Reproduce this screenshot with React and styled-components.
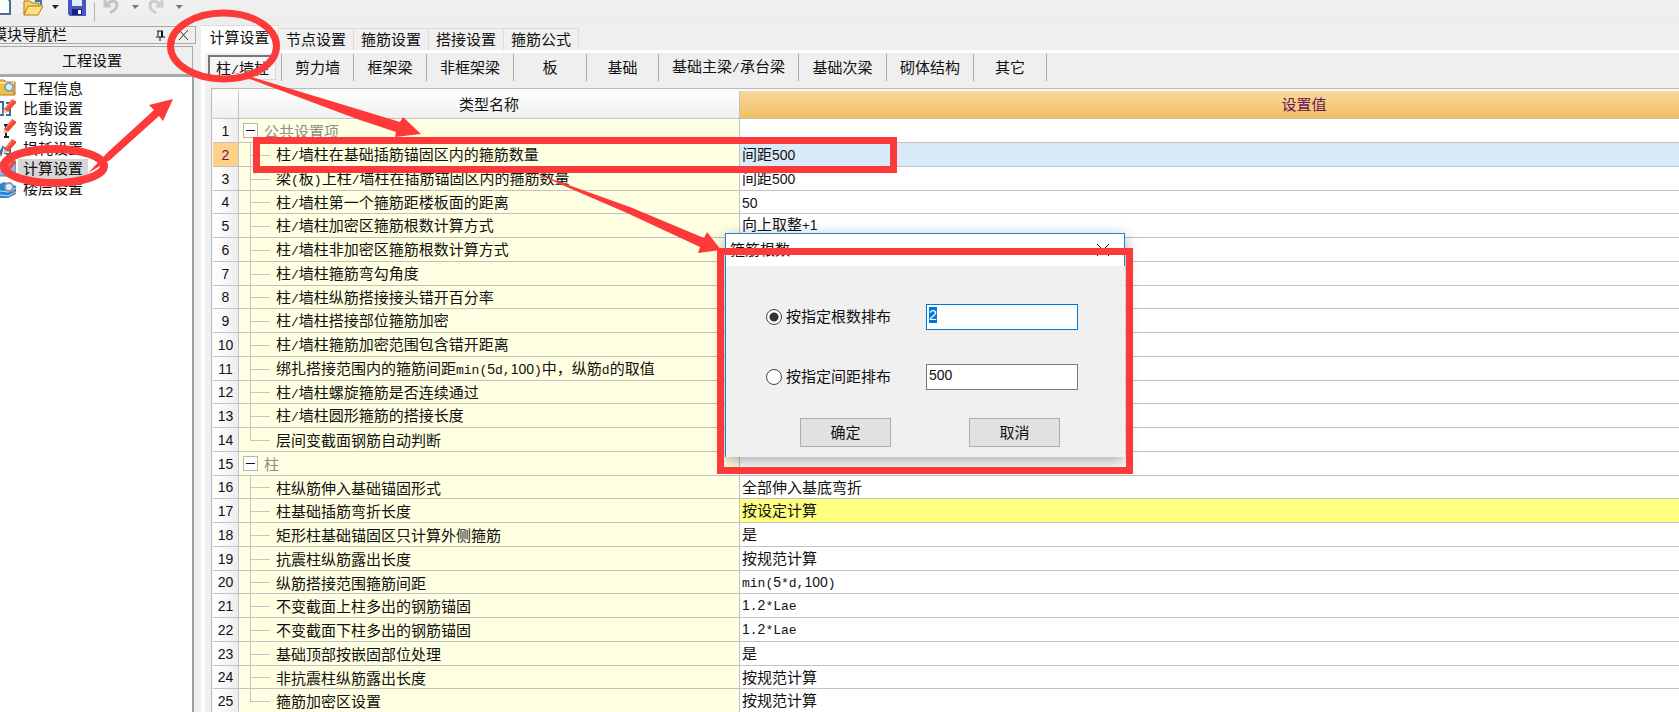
import React, { useState, useEffect, useRef } from 'react';
import styled, { createGlobalStyle } from 'styled-components';

const GlobalStyle = createGlobalStyle`
  * {
    box-sizing: border-box;
  }

  body {
    margin: 0;
    overflow: hidden;
    background: #efefef;
  }

  body, button, input {
    font-family: "Liberation Sans", "Noto Sans CJK SC", sans-serif;
    font-size: 15px;
    line-height: 20px;
    color: #111;
  }

  ::selection {
    background: #0078d7;
    color: #fff;
  }
`;

const Page = styled.div`
  position: relative;
  display: flex;
  flex-direction: column;
  height: 100vh;
  overflow: hidden;
`;

const Half = styled.span`
  font-family: "Liberation Mono", monospace;
  font-size: 13px;
`;

const Digits = styled.span`
  font-size: 14px;
`;

const Toolbar = styled.header`
  display: flex;
  align-items: center;
  flex: none;
  height: 24px;
  background: linear-gradient(#f1f1f1, #ededed);
`;

const ToolButton = styled.button`
  flex: none;
  width: ${props => props.$width}px;
  height: 24px;
  padding: 0;
  border: none;
  background: none;

  svg {
    display: block;
  }
`;

const ToolDivider = styled.div`
  width: 1px;
  height: 20px;
  margin: 0 8px;
  background: #b4b4b4;
`;

const Workspace = styled.div`
  display: flex;
  flex: 1;
  min-height: 0;
`;

const Sidebar = styled.aside`
  display: flex;
  flex-direction: column;
  flex: none;
  width: 204px;
  margin-left: -8px;
  padding-top: 2px;
`;

const PanelTitle = styled.div`
  display: flex;
  align-items: center;
  height: 18px;
  padding-right: 5px;
  border: 1px solid #a9a9a9;
  border-left: none;
  white-space: nowrap;

  span {
    flex: 1;
  }
`;

const PanelButton = styled.button`
  width: 12px;
  height: 14px;
  margin-left: 12px;
  padding: 0;
  border: none;
  background: none;

  svg {
    display: block;
  }
`;

const SectionButton = styled.button`
  width: 201px;
  height: 31px;
  margin-top: 2px;
  padding: 0;
  border: solid #a9a9a9;
  border-width: 1px 1px 3px 0;
  background: #efefef;
`;

const Tree = styled.nav`
  flex: 1;
  width: 202px;
  padding-top: 2px;
  border-right: 2px solid #9c9ea6;
  background: #fff;
`;

const TreeItem = styled.a`
  display: flex;
  align-items: center;
  height: 20px;
  color: #111;
  text-decoration: none;

  svg {
    flex: none;
    margin-right: 2px;
  }

  span {
    padding: 0 5px;
    background: ${props => props.$active ? '#d6d6d6' : 'transparent'};
  }
`;

const Main = styled.main`
  display: flex;
  flex-direction: column;
  flex: 1;
  min-width: 0;
  margin-left: 5px;
`;

const Tabs = styled.div`
  display: flex;
  align-items: flex-end;
  height: 26px;
`;

const Tab = styled.button`
  flex: none;
  width: ${props => props.$active ? 78 : 75}px;
  height: ${props => props.$active ? 25 : 22}px;
  padding: 0;
  border: solid #dcdcdc;
  border-width: 1px 1px 0 0;
  background: ${props => props.$active ? '#fff' : '#f0f0f0'};
`;

const TabPanel = styled.section`
  display: flex;
  flex-direction: column;
  flex: 1;
  min-height: 0;
  border: solid #fff;
  border-width: 3px 0 0 4px;
`;

const SubTabs = styled.div`
  display: flex;
  align-items: center;
  height: 35px;
  padding: 0 0 6px 3px;
`;

const SubTab = styled.button`
  flex: none;
  width: ${props => props.$width}px;
  height: 27px;
  padding: 0;
  border: none;
  border-right: 1px solid #a8a8a8;
  background: none;
`;

const PressedTab = styled.span`
  display: block;
  width: 68px;
  height: 25px;
  padding-top: 2px;
  border: 1px solid #d8d8d8;
  border-top: 2px solid #777;
  border-left: 2px solid #777;
  background: #f5f5f5;
`;

const GridFrame = styled.div`
  flex: 1;
  min-height: 0;
  margin-left: 6px;
  padding: 2px 0 0 1px;
  overflow: hidden;
  border: solid #b9b9be;
  border-width: 1px 0 0 1px;
  background: #f7f7f7;
`;

// the value column runs on past the right edge of the window
const Grid = styled.table`
  width: calc(100% + 190px);
  table-layout: fixed;
  border-collapse: separate;
  border-spacing: 0;
`;

const NumberCol = styled.col`
  width: 26px;
`;

const NameCol = styled.col`
  width: 501px;
`;

const HeadCell = styled.th`
  height: 28px;
  padding: 0;
  border: solid #c2c2c2;
  border-width: 0 1px 1px 0;
  background: ${props => props.$active ? 'linear-gradient(#f9d79d, #f0c162)' : 'linear-gradient(#fff, #efefef)'};
  color: ${props => props.$active ? '#6a1560' : '#111'};
  font-weight: normal;
`;

const Row = styled.tr`
  height: 24px;

  &:nth-child(4n) {
    height: 23px;
  }
`;

const Cell = styled.td`
  height: inherit;
  padding: 0;
  border: solid #c2c2c2;
  border-width: 0 1px 1px 0;
  line-height: 18px;
  white-space: nowrap;
`;

const NumberCell = styled(Cell)`
  background: ${props => props.$active ? '#fed088' : 'linear-gradient(90deg, #fff, #eee)'};
  color: ${props => props.$active ? '#6a1560' : '#111'};
  text-align: center;
`;

const NameCell = styled(Cell)`
  background: #ffffe1;
`;

const ValueCell = styled(Cell)`
  padding: 1px 0 0 2px;
  background: ${props => props.$fill || '#fff'};
`;

const NameInner = styled.div`
  display: flex;
  align-items: center;
  height: 22px;
  padding-left: ${props => props.$group ? 4 : 11}px;
  color: ${props => props.$group ? '#8c8c8c' : '#111'};
`;

const NameText = styled.span`
  padding-top: 3px;
`;

const Branch = styled.span`
  width: 26px;
  height: 24px;
  background-image: linear-gradient(#c6c6c6, #c6c6c6), linear-gradient(#c6c6c6, #c6c6c6);
  background-repeat: no-repeat;
  background-position: 0 0, 0 12px;
  background-size: 1px ${props => props.$last ? '50%' : '100%'}, 20px 1px;
`;

const Toggle = styled.button`
  display: flex;
  align-items: center;
  justify-content: center;
  width: 15px;
  height: 15px;
  margin-right: 6px;
  padding: 0;
  border: 1px solid #b5b5b5;
  background: #fff;

  &::before {
    content: "";
    width: 9px;
    height: 1px;
    background: #111;
  }
`;

const Dialog = styled.form`
  position: absolute;
  top: 233px;
  left: 725px;
  width: 400px;
  border-left: 1px solid #1883d7;
  background: #f0f0f0;
  box-shadow: 0 4px 14px rgba(0, 0, 0, 0.35);
`;

const DialogTitle = styled.div`
  display: flex;
  align-items: center;
  justify-content: space-between;
  height: 33px;
  padding: 0 15px 0 4px;
  border: solid #1883d7;
  border-width: 1px 1px 0 0;
  background: #fff;
`;

const DialogClose = styled.button`
  width: 12px;
  height: 12px;
  padding: 0;
  border: none;
  background: none;

  svg {
    display: block;
  }
`;

const Options = styled.div`
  display: grid;
  grid-template-columns: 160px 152px;
  row-gap: 34px;
  padding: 38px 0 0 40px;
`;

const OptionLabel = styled.label`
  display: flex;
  align-items: center;
  gap: 4px;
`;

const Radio = styled.input`
  width: 16px;
  height: 16px;
  margin: 0;
  appearance: none;
  border: 1px solid #444;
  border-radius: 50%;
  background: #fff;

  &:checked {
    background: radial-gradient(circle, #333 4px, #fff 5px);
  }
`;

const TextBox = styled.input`
  width: 100%;
  height: 26px;
  padding: 0 2px 4px;
  border: 1px solid #7a7a7a;
  outline: none;
  background: #fff;
  font-size: 14px;

  &:focus {
    border-color: #0078d7;
  }
`;

const DialogButtons = styled.div`
  display: flex;
  gap: 78px;
  padding: 28px 0 10px 74px;
`;

const DialogButton = styled.button`
  width: 91px;
  height: 29px;
  padding: 0;
  border: 1px solid #adadad;
  background: #e1e1e1;
`;

const Marks = styled.svg`
  position: absolute;
  top: 0;
  left: 0;
  pointer-events: none;
`;

const treeItems = [
  { name: '工程信息', icon: 'info' },
  { name: '比重设置', icon: 'weight' },
  { name: '弯钩设置', icon: 'hook' },
  { name: '损耗设置', icon: 'loss' },
  { name: '计算设置', icon: 'calc' },
  { name: '楼层设置', icon: 'floor' }
];

const tabs = ['计算设置', '节点设置', '箍筋设置', '搭接设置', '箍筋公式'];

const subTabs = [
  { name: '柱/墙柱', width: 74 },
  { name: '剪力墙', width: 72 },
  { name: '框架梁', width: 73 },
  { name: '非框架梁', width: 87 },
  { name: '板', width: 73 },
  { name: '基础', width: 72 },
  { name: '基础主梁/承台梁', width: 140 },
  { name: '基础次梁', width: 88 },
  { name: '砌体结构', width: 87 },
  { name: '其它', width: 73 }
];

const rows = [
  { name: '公共设置项', group: true },
  { name: '柱/墙柱在基础插筋锚固区内的箍筋数量', value: '间距500', fill: '#d9eaf8' },
  { name: '梁(板)上柱/墙柱在插筋锚固区内的箍筋数量', value: '间距500' },
  { name: '柱/墙柱第一个箍筋距楼板面的距离', value: '50' },
  { name: '柱/墙柱加密区箍筋根数计算方式', value: '向上取整+1' },
  { name: '柱/墙柱非加密区箍筋根数计算方式' },
  { name: '柱/墙柱箍筋弯勾角度' },
  { name: '柱/墙柱纵筋搭接接头错开百分率' },
  { name: '柱/墙柱搭接部位箍筋加密' },
  { name: '柱/墙柱箍筋加密范围包含错开距离' },
  { name: '绑扎搭接范围内的箍筋间距min(5d,100)中，纵筋d的取值' },
  { name: '柱/墙柱螺旋箍筋是否连续通过' },
  { name: '柱/墙柱圆形箍筋的搭接长度' },
  { name: '层间变截面钢筋自动判断', last: true },
  { name: '柱', group: true },
  { name: '柱纵筋伸入基础锚固形式', value: '全部伸入基底弯折' },
  { name: '柱基础插筋弯折长度', value: '按设定计算', fill: '#ffff80' },
  { name: '矩形柱基础锚固区只计算外侧箍筋', value: '是' },
  { name: '抗震柱纵筋露出长度', value: '按规范计算' },
  { name: '纵筋搭接范围箍筋间距', value: 'min(5*d,100)' },
  { name: '不变截面上柱多出的钢筋锚固', value: '1.2*Lae' },
  { name: '不变截面下柱多出的钢筋锚固', value: '1.2*Lae' },
  { name: '基础顶部按嵌固部位处理', value: '是' },
  { name: '非抗震柱纵筋露出长度', value: '按规范计算' },
  { name: '箍筋加密区设置', value: '按规范计算', last: true }
];

// digits and latin runs are set at half the width of a hanzi
const Mixed = ({ text = '' }) => (
  <span>
    {String(text).split(/([0-9]+|[\x21-\x2f\x3a-\x7e]+)/).filter(Boolean).map((part, i) => {
      if (/^[0-9]/.test(part)) return <Digits key={i}>{part}</Digits>;
      if (/^[\x21-\x7e]/.test(part)) return <Half key={i}>{part}</Half>;
      return part;
    })}
  </span>
);

const Pencil = () => (
  <g>
    <path d="M4 10 L12 0 L17 3 L8 13 Z" fill="#ee4a34" />
    <path d="M6 9 L13 1" stroke="#ff9c84" />
    <path d="M4 10 L8 13 L3 15 Z" fill="#f2c58e" />
  </g>
);

const Lens = () => (
  <g>
    <path d="M12 11 L15 15" stroke="#c98a52" strokeWidth="2" />
    <circle cx="9" cy="8" r="4" fill="#d9f1ff" stroke="#8d9cac" strokeWidth="2" />
  </g>
);

const TreeIcon = ({ name }) => (
  <svg width="24" height="20" viewBox="-8 0 24 20" fill="none" aria-hidden="true">
    {name === 'info' && (
      <>
        <path d="M-8 1 H4 L6 3 H15 V16 H-8 Z" fill="#f0bf45" stroke="#b07d16" />
        <path d="M-7 4 H14" stroke="#ffe69a" strokeWidth="2" />
        <Lens />
      </>
    )}
    {name === 'weight' && (
      <>
        <path d="M-2 3 H3 V16 H-2 M6 4 H10 V9 H7 M10 9 V16 H6" stroke="#386db5" strokeWidth="2" />
        <Pencil />
      </>
    )}
    {name === 'hook' && (
      <>
        <path d="M4 6 H8 M6 7 V18 M4 18 H9" stroke="#222" strokeWidth="2" />
        <Pencil />
      </>
    )}
    {name === 'loss' && (
      <>
        <path d="M-2 7 L1 15 L3 7 M5 15 V8 M6 15 H10 V9" stroke="#386db5" strokeWidth="2" />
        <Pencil />
      </>
    )}
    {name === 'calc' && (
      <>
        <path d="M-6 6 L4 2 H16 V17 H-6 Z" fill="#8fb8e9" stroke="#4a7fc4" />
        <Pencil />
      </>
    )}
    {name === 'floor' && (
      <>
        <path d="M-8 8 L4 3 L16 7 V15 L8 19 H-8 Z" fill="#2c83d1" />
        <path d="M-8 11 L8 13 L16 9 M-8 15 L8 17 L16 13" stroke="#bfe0f8" />
        <Lens />
      </>
    )}
  </svg>
);

const Caret = ({ color = '#222' }) => (
  <svg width="7" height="24" viewBox="0 0 7 24"><path d="M0 5 H7 L3 9 Z" fill={color} /></svg>
);

const MainToolbar = () => (
  <Toolbar>
    <ToolButton $width={23} aria-label="新建">
      <svg width="12" height="24" viewBox="0 0 12 24">
        <path d="M-4 -4 H6 L10 1 V14 H-4 Z" fill="#fafdff" stroke="#4b6d94" strokeWidth="2" />
      </svg>
    </ToolButton>
    <ToolButton $width={29} aria-label="打开">
      <svg width="22" height="24" viewBox="0 0 22 24">
        <path d="M1 15 V1 H7 L9 3 H16 V7" fill="#f8d46b" stroke="#a8761b" />
        <path d="M1 15 L5 6 H20 L15 15 Z" fill="#ffdf82" stroke="#b47b17" />
        <path d="M12 1 H18 V5" fill="none" stroke="#4a6fa2" strokeWidth="2" />
      </svg>
    </ToolButton>
    <ToolButton $width={16} aria-label="打开选项"><Caret /></ToolButton>
    <ToolButton $width={18} aria-label="保存">
      <svg width="18" height="24" viewBox="0 0 18 24">
        <path d="M0 -3 H18 V16 H2 L0 14 Z" fill="#4558c4" />
        <path d="M4 -2 H14 V6 H4 Z" fill="#e4ecfa" />
        <path d="M4 9 H14 V15 H4 Z" fill="#17237a" />
        <path d="M10 10 H13 V14 H10 Z" fill="#fff" />
      </svg>
    </ToolButton>
    <ToolDivider />
    <ToolButton $width={29} aria-label="撤销">
      <svg width="18" height="24" viewBox="0 0 18 24" fill="none">
        <path d="M2 0 V6 H8 M3 5 C7 0 14 0 14 5 C14 9 11 11 7 13" stroke="#c4c4c4" strokeWidth="3" />
      </svg>
    </ToolButton>
    <ToolButton $width={16} aria-label="撤销选项"><Caret color="#777" /></ToolButton>
    <ToolButton $width={28} aria-label="恢复">
      <svg width="18" height="24" viewBox="0 0 18 24" fill="none">
        <path d="M14 0 V6 H8 M13 5 C9 0 2 0 2 5 C2 9 4 11 8 13" stroke="#cdcdcd" strokeWidth="3" />
      </svg>
    </ToolButton>
    <ToolButton $width={16} aria-label="恢复选项"><Caret color="#777" /></ToolButton>
  </Toolbar>
);

const SettingsGrid = () => (
  <GridFrame>
    <Grid>
      <colgroup>
        <NumberCol />
        <NameCol />
        <col />
      </colgroup>
      <thead>
        <tr>
          <HeadCell aria-label="序号" />
          <HeadCell>类型名称</HeadCell>
          <HeadCell $active>设置值</HeadCell>
        </tr>
      </thead>
      <tbody>
        {rows.map((row, i) => (
          <Row key={i}>
            <NumberCell $active={i === 1}><Mixed text={i + 1} /></NumberCell>
            <NameCell>
              <NameInner $group={row.group}>
                {row.group ? <Toggle aria-label={row.name} /> : <Branch $last={row.last} />}
                <NameText><Mixed text={row.name} /></NameText>
              </NameInner>
            </NameCell>
            <ValueCell $fill={row.fill}><Mixed text={row.value} /></ValueCell>
          </Row>
        ))}
      </tbody>
    </Grid>
  </GridFrame>
);

const StirrupDialog = () => {
  const [mode, setMode] = useState('count');
  const [count, setCount] = useState('2');
  const [spacing, setSpacing] = useState('500');
  const countRef = useRef(null);

  useEffect(() => {
    countRef.current.focus();
    countRef.current.select();
  }, []);

  return (
    <Dialog onSubmit={(e) => e.preventDefault()}>
      <DialogTitle>
        <span>箍筋根数</span>
        <DialogClose type="button" aria-label="关闭">
          <svg width="12" height="12" viewBox="0 0 12 12"><path d="M0 0 L12 12 M12 0 L0 12" stroke="#111" /></svg>
        </DialogClose>
      </DialogTitle>
      <Options>
        <OptionLabel>
          <Radio type="radio" name="mode" checked={mode === 'count'} onChange={() => setMode('count')} />
          按指定根数排布
        </OptionLabel>
        <TextBox ref={countRef} aria-label="根数" value={count} onChange={(e) => setCount(e.target.value)} />
        <OptionLabel>
          <Radio type="radio" name="mode" checked={mode === 'spacing'} onChange={() => setMode('spacing')} />
          按指定间距排布
        </OptionLabel>
        <TextBox aria-label="间距" value={spacing} onChange={(e) => setSpacing(e.target.value)} />
      </Options>
      <DialogButtons>
        <DialogButton type="submit">确定</DialogButton>
        <DialogButton type="button">取消</DialogButton>
      </DialogButtons>
    </Dialog>
  );
};

const StepMarks = () => (
  <Marks width="1140" height="480" viewBox="0 0 1140 480" fill="none" aria-hidden="true">
    <g stroke="#fd3a39" strokeWidth="7">
      <ellipse cx="223.5" cy="46" rx="53" ry="33" />
      <ellipse cx="54" cy="166" rx="50" ry="17" strokeWidth="8" />
      <rect x="256.5" y="140.5" width="637" height="29" />
      <rect x="720.5" y="251.5" width="409" height="219" />
    </g>
    <g fill="#fd3a39">
      <path d="M88 173 L107 153 L154 110 L149 105 L173 99 L163 121 L159 116 L110 160 Z" />
      <path d="M232 72 L255 78 L400 122 L403 117 L421 134 L395 137 L396 132 L357 119 L250 79 Z" />
      <path d="M532 172 L630 207 L704 238 L707 232 L721 250 L698 253 L700 247 L627 213 Z" />
    </g>
  </Marks>
);

const App = () => {
  const [tab, setTab] = useState(tabs[0]);

  return (
    <Page>
      <GlobalStyle />
      <MainToolbar />
      <Workspace>
        <Sidebar>
          <PanelTitle>
            <span>模块导航栏</span>
            <PanelButton aria-label="固定">
              <svg width="12" height="14" viewBox="0 0 12 14" fill="none">
                <path d="M4 3 V8 M3 3 H9 M2 9 H11 M6 9 V13" stroke="#111" />
                <path d="M8 3 V9" stroke="#111" strokeWidth="2" />
              </svg>
            </PanelButton>
            <PanelButton aria-label="关闭">
              <svg width="12" height="14" viewBox="0 0 12 14"><path d="M1 2 L10 12 M10 2 L1 12" stroke="#333" /></svg>
            </PanelButton>
          </PanelTitle>
          <SectionButton>工程设置</SectionButton>
          <Tree>
            {treeItems.map(item => (
              <TreeItem key={item.name} href="#" $active={item.icon === 'calc'}>
                <TreeIcon name={item.icon} />
                <span>{item.name}</span>
              </TreeItem>
            ))}
          </Tree>
        </Sidebar>
        <Main>
          <Tabs>
            {tabs.map(name => (
              <Tab key={name} $active={name === tab} onClick={() => setTab(name)}>{name}</Tab>
            ))}
          </Tabs>
          <TabPanel>
            <SubTabs>
              {subTabs.map((item, i) => (
                <SubTab key={item.name} $width={item.width}>
                  {i === 0 ? <PressedTab><Mixed text={item.name} /></PressedTab> : <Mixed text={item.name} />}
                </SubTab>
              ))}
            </SubTabs>
            <SettingsGrid />
          </TabPanel>
        </Main>
      </Workspace>
      <StirrupDialog />
      <StepMarks />
    </Page>
  );
};

export default App;
